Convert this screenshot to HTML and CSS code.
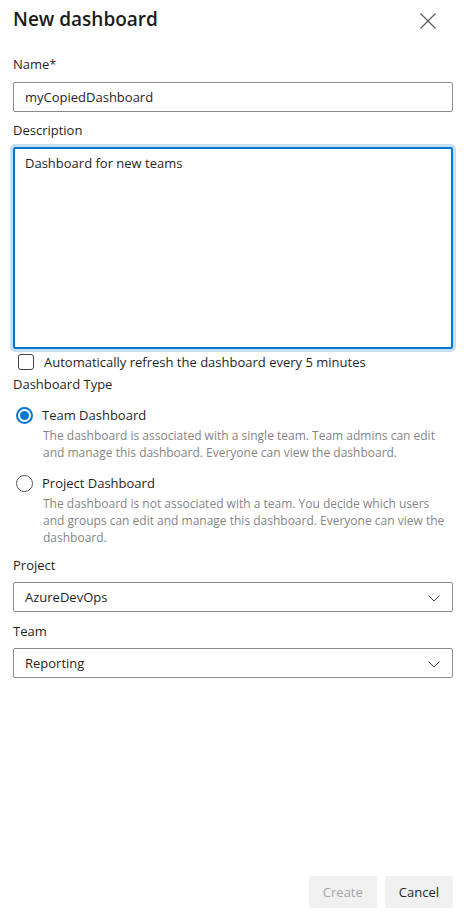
FILE: index.html
```html
<!DOCTYPE html>
<html lang="en">
<head>
<meta charset="utf-8">
<title>New dashboard</title>
<link rel="stylesheet" href="styles.css">
</head>
<body>
<div class="panel">
  <div class="header">
    <h1 class="title">New dashboard</h1>
    <button class="close" aria-label="Close">
      <svg width="16" height="16" viewBox="0 0 16 16"><path d="M0.5 0.5 L15.5 15.5 M15.5 0.5 L0.5 15.5" stroke="#555" stroke-width="1.1" fill="none"/></svg>
    </button>
  </div>

  <label class="label label-first">Name*</label>
  <div class="textbox">myCopiedDashboard</div>

  <label class="label">Description</label>
  <div class="textarea">Dashboard for new teams</div>

  <div class="check-row">
    <span class="checkbox"></span>
    <span class="check-label">Automatically refresh the dashboard every 5 minutes</span>
  </div>

  <div class="label type-label">Dashboard Type</div>

  <div class="radio-item">
    <div class="radio-row">
      <span class="radio checked"></span>
      <span class="radio-label">Team Dashboard</span>
    </div>
    <div class="radio-desc">The dashboard is associated with a single team. Team admins can edit and manage this dashboard. Everyone can view the dashboard.</div>
  </div>

  <div class="radio-item second">
    <div class="radio-row">
      <span class="radio"></span>
      <span class="radio-label">Project Dashboard</span>
    </div>
    <div class="radio-desc">The dashboard is not associated with a team. You decide which users and groups can edit and manage this dashboard. Everyone can view the dashboard.</div>
  </div>

  <label class="label project-label">Project</label>
  <div class="dropdown">
    <span>AzureDevOps</span>
    <svg class="chev" width="12" height="7" viewBox="0 0 12 7"><path d="M0.5 0.5 L6 6 L11.5 0.5" stroke="#444" stroke-width="1" fill="none"/></svg>
  </div>

  <label class="label team-label">Team</label>
  <div class="dropdown">
    <span>Reporting</span>
    <svg class="chev" width="12" height="7" viewBox="0 0 12 7"><path d="M0.5 0.5 L6 6 L11.5 0.5" stroke="#444" stroke-width="1" fill="none"/></svg>
  </div>

  <div class="footer">
    <button class="btn disabled">Create</button>
    <button class="btn">Cancel</button>
  </div>
</div>
</body>
</html>
```

FILE: styles.css
```css
html, body {
  margin: 0;
  padding: 0;
  background: #ffffff;
}
body {
  font-family: "Open Sans", "Noto Sans", sans-serif;
  font-size: 13px;
  color: #1f1f1f;
}
.panel {
  box-sizing: border-box;
  width: 464px;
  height: 914px;
  padding: 0 11px 6px 13px;
  display: flex;
  flex-direction: column;
}
.header {
  display: flex;
  justify-content: space-between;
  align-items: flex-start;
  padding-top: 5px;
}
.title {
  margin: 0;
  font-size: 19px;
  font-weight: 550;
  line-height: 28px;
  color: #1b1b1b;
}
.close {
  border: 0;
  background: none;
  padding: 0;
  margin: 8px 17px 0 0;
  width: 16px;
  height: 16px;
  display: block;
}
.close svg { display: block; }
.label {
  display: block;
  line-height: 20px;
  margin: 8px 0 7px;
}
.label-first { margin-top: 21px; margin-bottom: 8px; }
.textbox {
  box-sizing: border-box;
  height: 30px;
  border: 1px solid #8a8a8a;
  border-radius: 2px;
  padding: 0 11px;
  line-height: 28px;
}
.textarea {
  box-sizing: border-box;
  height: 202px;
  border: 2px solid #0078d4;
  border-radius: 2px;
  box-shadow: 0 0 0 3px #c7e0f4;
  padding: 4px 10px;
  line-height: 20px;
}
.check-row {
  display: flex;
  align-items: center;
  margin-top: 3px;
  height: 20px;
  padding-left: 5px;
}
.checkbox {
  box-sizing: border-box;
  width: 16px;
  height: 16px;
  border: 1px solid #444;
  border-radius: 3px;
  margin-right: 10px;
}
.check-label { line-height: 20px; }
.type-label { margin: 2px 0 0; }
.radio-item { margin-top: 11px; }
.radio-item.second { margin-top: 12px; }
.radio-row {
  display: flex;
  align-items: center;
  height: 20px;
  padding-left: 3px;
}
.radio {
  box-sizing: border-box;
  width: 17px;
  height: 17px;
  border-radius: 50%;
  border: 1px solid #555;
  margin-right: 9px;
  position: relative;
}
.radio.checked {
  border: 2px solid #0078d4;
}
.radio.checked::after {
  content: "";
  position: absolute;
  left: 2px;
  top: 2px;
  width: 9px;
  height: 9px;
  border-radius: 50%;
  background: #0078d4;
}
.radio-desc {
  margin-top: 2px;
  padding-left: 30px;
  font-size: 12px;
  line-height: 17px;
  color: #858585;
}
.project-label { margin-top: 9px; }
.team-label { margin-top: 9px; }
.dropdown {
  box-sizing: border-box;
  height: 30px;
  border: 1px solid #8a8a8a;
  border-radius: 2px;
  padding: 0 12px 0 11px;
  line-height: 28px;
  display: flex;
  justify-content: space-between;
  align-items: center;
}
.chev { display: block; margin-top: 2px; }
.footer {
  margin-top: auto;
  display: flex;
  justify-content: flex-end;
  gap: 8px;
}
.btn {
  height: 32px;
  border: 0;
  border-radius: 2px;
  background: #f0f0f0;
  font-family: "Open Sans", "Noto Sans", sans-serif;
  font-size: 13px;
  font-weight: 400;
  color: #1f1f1f;
  padding: 0 14px;
}
.btn.disabled { color: #a6a6a6; }
```
